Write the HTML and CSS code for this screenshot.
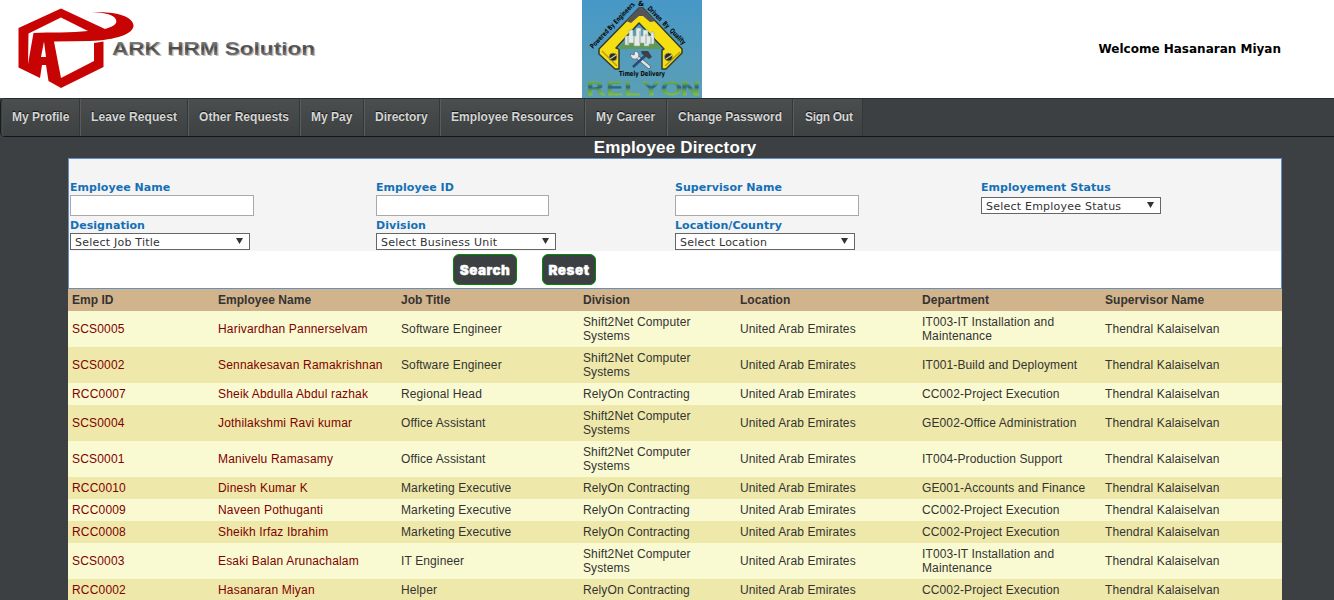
FILE: index.html
```html
<!DOCTYPE html>
<html lang="en">
<head>
<meta charset="utf-8">
<title>Employee Directory</title>
<link rel="stylesheet" href="styles.css">
</head>
<body>
<header class="header">
  <svg class="ark-logo" width="330" height="98" viewBox="0 0 330 98" role="img" aria-label="ARK HRM Solution">
    <defs>
      <linearGradient id="silver" x1="0" y1="0" x2="0" y2="1"><stop offset="0" stop-color="#aaa"/><stop offset=".5" stop-color="#484848"/><stop offset="1" stop-color="#888"/></linearGradient>
      <filter id="soft" x="-5%" y="-20%" width="110%" height="150%"><feGaussianBlur stdDeviation=".7"/></filter>
    </defs>
    <g fill="#c80303">
      <path fill-rule="evenodd" d="M18.500 28 L61 8.500 L105 29 C116 26 119 22 114 17 C109 13.500 102 12.500 92 12.500 C112 11 132 15 133.500 25 C134 34 116 40 90 41 L54 41.500 L61 78 L94 61 L94 43 L103.500 41.500 L103.500 67 L61 88 L48.500 81 L46 65 L42 65 L40 78 L18.500 67.500 Z M28.500 33.500 L28 64 L33.500 33 C50 32 72 33 88 31 L61 17.500 Z M44 41.500 L41 57 L46 57 Z"/>
    </g>
    <text class="ark-name" x="113.500" y="56" textLength="203" lengthAdjust="spacingAndGlyphs" fill="#aaa" opacity=".7" filter="url(#soft)">ARK HRM Solution</text>
    <text class="ark-name" x="112" y="54.500" textLength="203" lengthAdjust="spacingAndGlyphs" fill="url(#silver)">ARK HRM Solution</text>
  </svg>
  <svg class="relyon-logo" width="120" height="98" viewBox="0 0 120 98" role="img" aria-label="Relyon">
    <defs>
      <linearGradient id="sky" x1="0" y1="0" x2="0" y2="1"><stop offset="0" stop-color="#4798c7"/><stop offset="1" stop-color="#5c9fb5"/></linearGradient>
      <linearGradient id="word" gradientUnits="userSpaceOnUse" x1="0" y1="-15" x2="0" y2="0"><stop offset="0" stop-color="#7fba45"/><stop offset=".3" stop-color="#5f9f50"/><stop offset=".5" stop-color="#215f92"/><stop offset=".7" stop-color="#5f9f50"/><stop offset="1" stop-color="#7fba45"/></linearGradient>
      <path id="left-edge" d="M11 49 L54 4"/>
      <path id="right-edge" d="M65 9 L102 46"/>
    </defs>
    <rect width="120" height="98" fill="url(#sky)"/>
    <path d="M57 8 L17 49 L17 54 L33 69 L37 69 L37 49 L34 48 L57 23 L82 49 L80 50 L80 69 L84 69 L100 53 L100 49 L61 8 Z" fill="#f5df12" stroke="#343b31" stroke-width="1.500" stroke-linejoin="round"/>
    <path d="M57 8 L44 21 L49 23 L57 16 L61 16 L68 22 L74 21 L61 8 Z" fill="#565454"/>
    <path d="M20 51 L35 66 M83 66 L98 52" stroke="#baa000" stroke-width="1.500"/>
    <g stroke="#a5a070" stroke-width=".8" fill="#292b27"><circle cx="31" cy="57" r="4"/><circle cx="86.500" cy="57" r="4"/></g>
    <path d="M28 59 L34 55 M84 59 L90 55" stroke="#d7cf70" stroke-width="1.300"/>
    <path d="M43 41 L73 41 L79 49 L36 49 Z" fill="#5f9955"/>
    <path d="M43 36 h4 v-6 h4 v6 h3 v-8 h5 v8 h2 v-6 h5 v6 h3 v-4 h3 v12 h-5 v2 h-5 v-3 h-4 v3 h-6 v-3 h-5 v2 h-4 Z" fill="#e5ece8" stroke="#92a7a1" stroke-width=".6"/>
    <path d="M46 37 v7 M52 35 v8 M58 31 v12 M64 34 v10 M69 37 v7" stroke="#8da79e"/>
    <path d="M54 56 L67 67" stroke="#59636c" stroke-width="4" stroke-linecap="round"/>
    <path d="M54 56 L67 67" stroke="#dce3e8" stroke-width="2.500" stroke-linecap="round"/>
    <path d="M48.500 54 L52 55 L53 51 C58 52 58 58 54 59 C51 60 48 57 48.500 54 Z" fill="#e3e9ed" stroke="#59636c" stroke-width=".7"/>
    <path d="M64 55 L51 67" stroke="#294b75" stroke-width="2.500"/>
    <path d="M59 51 L66 51 L70 57 L67 59 L63 56 L60 54 Z" fill="#3b4144"/>
    <g class="motto" fill="#080808">
      <text><textPath href="#left-edge" textLength="61" lengthAdjust="spacingAndGlyphs">Powered By Engineers</textPath></text>
      <text x="56" y="6">&amp;</text>
      <text><textPath href="#right-edge" textLength="51" lengthAdjust="spacingAndGlyphs">Driven&#160; By&#160; Quality</textPath></text>
      <text x="37" y="75.500" textLength="46" lengthAdjust="spacingAndGlyphs">Timely Delivery</text>
    </g>
    <g transform="translate(0 94.500) scale(1.450 1)">
      <text class="relyon-word" x="3 16.500 29 42 54.500 68" y="0" fill="url(#word)" stroke="url(#word)" stroke-width="1">RELYON</text>
    </g>
  </svg>
  <div class="welcome">Welcome Hasanaran Miyan</div>
</header>
<nav class="menu">
  <a>My Profile</a><a>Leave Request</a><a>Other Requests</a><a>My Pay</a><a>Directory</a><a>Employee Resources</a><a>My Career</a><a>Change Password</a><a>Sign Out</a>
</nav>
<main class="content">
  <h1 class="title">Employee Directory</h1>
  <form class="filters">
    <div class="fields">
      <div class="field"><label>Employee Name</label><input type="text"></div>
      <div class="field"><label>Employee ID</label><input class="short" type="text"></div>
      <div class="field"><label>Supervisor Name</label><input type="text"></div>
      <div class="field status"><label>Employement Status</label><div class="select">Select Employee Status<i></i></div></div>
      <div class="field"><label>Designation</label><div class="select">Select Job Title<i></i></div></div>
      <div class="field"><label>Division</label><div class="select">Select Business Unit<i></i></div></div>
      <div class="field"><label>Location/Country</label><div class="select">Select Location<i></i></div></div>
    </div>
    <div class="actions"><button type="button" class="search">Search</button><button type="button" class="reset">Reset</button></div>
  </form>
  <table class="directory">
    <colgroup><col class="c-id"><col class="c-name"><col class="c-job"><col class="c-div"><col class="c-loc"><col class="c-dep"><col class="c-sup"></colgroup>
    <thead><tr><th>Emp ID</th><th>Employee Name</th><th>Job Title</th><th>Division</th><th>Location</th><th>Department</th><th>Supervisor Name</th></tr></thead>
    <tbody>
      <tr><td>SCS0005</td><td>Harivardhan Pannerselvam</td><td>Software Engineer</td><td>Shift2Net Computer<br>Systems</td><td>United Arab Emirates</td><td>IT003-IT Installation and<br>Maintenance</td><td>Thendral Kalaiselvan</td></tr>
      <tr><td>SCS0002</td><td>Sennakesavan Ramakrishnan</td><td>Software Engineer</td><td>Shift2Net Computer<br>Systems</td><td>United Arab Emirates</td><td>IT001-Build and Deployment</td><td>Thendral Kalaiselvan</td></tr>
      <tr><td>RCC0007</td><td>Sheik Abdulla Abdul razhak</td><td>Regional Head</td><td>RelyOn Contracting</td><td>United Arab Emirates</td><td>CC002-Project Execution</td><td>Thendral Kalaiselvan</td></tr>
      <tr><td>SCS0004</td><td>Jothilakshmi Ravi kumar</td><td>Office Assistant</td><td>Shift2Net Computer<br>Systems</td><td>United Arab Emirates</td><td>GE002-Office Administration</td><td>Thendral Kalaiselvan</td></tr>
      <tr><td>SCS0001</td><td>Manivelu Ramasamy</td><td>Office Assistant</td><td>Shift2Net Computer<br>Systems</td><td>United Arab Emirates</td><td>IT004-Production Support</td><td>Thendral Kalaiselvan</td></tr>
      <tr><td>RCC0010</td><td>Dinesh Kumar K</td><td>Marketing Executive</td><td>RelyOn Contracting</td><td>United Arab Emirates</td><td>GE001-Accounts and Finance</td><td>Thendral Kalaiselvan</td></tr>
      <tr><td>RCC0009</td><td>Naveen Pothuganti</td><td>Marketing Executive</td><td>RelyOn Contracting</td><td>United Arab Emirates</td><td>CC002-Project Execution</td><td>Thendral Kalaiselvan</td></tr>
      <tr><td>RCC0008</td><td>Sheikh Irfaz Ibrahim</td><td>Marketing Executive</td><td>RelyOn Contracting</td><td>United Arab Emirates</td><td>CC002-Project Execution</td><td>Thendral Kalaiselvan</td></tr>
      <tr><td>SCS0003</td><td>Esaki Balan Arunachalam</td><td>IT Engineer</td><td>Shift2Net Computer<br>Systems</td><td>United Arab Emirates</td><td>IT003-IT Installation and<br>Maintenance</td><td>Thendral Kalaiselvan</td></tr>
      <tr><td>RCC0002</td><td>Hasanaran Miyan</td><td>Helper</td><td>RelyOn Contracting</td><td>United Arab Emirates</td><td>CC002-Project Execution</td><td>Thendral Kalaiselvan</td></tr>
    </tbody>
  </table>
</main>
</body>
</html>
```

FILE: styles.css
```css
* { box-sizing: border-box; }
html, body { height: 600px; overflow: hidden; }
body { margin: 0; background: #3c4042; font-family: "Liberation Sans", Arial, sans-serif; font-size: 12px; color: #333; }
.header { display: grid; grid-template-columns: 582px 120px 1fr; height: 98px; background: #fff; }
.header svg { display: block; }
.ark-name { font: bold 18.5px "Liberation Sans", Arial, sans-serif; }
.motto { font: bold 7px "DejaVu Sans", sans-serif; }
.relyon-word { font: 18.5px "DejaVu Sans", sans-serif; }
.welcome { padding: 42px 53px 0 0; text-align: right; font: bold 12px/15px "DejaVu Sans", Verdana, sans-serif; color: #000; }
.menu { display: flex; height: 39px; padding-left: 1px; border-top: 1px solid #252e2e; border-bottom: 1px solid #111719; border-left: 1px solid #181c1c; border-radius: 5px 0 0 5px; }
.menu a { padding-left: 9px; border-left: 1px solid #5a5c5c; border-right: 1px solid #343838; background: linear-gradient(#4c4e4e, #3d4142); font-weight: bold; line-height: 37px; color: #d5d5d5; text-shadow: 0 -1px 1px #111; white-space: nowrap; }
.menu a:nth-child(1) { width: 78px; border-left-color: #484b4b; }
.menu a:nth-child(2) { width: 108px; letter-spacing: .1px; }
.menu a:nth-child(3) { width: 112px; letter-spacing: .05px; }
.menu a:nth-child(4) { width: 64px; }
.menu a:nth-child(5) { width: 76px; }
.menu a:nth-child(6) { width: 145px; letter-spacing: .06px; }
.menu a:nth-child(7) { width: 82px; letter-spacing: .15px; }
.menu a:nth-child(8) { width: 126px; }
.menu a:nth-child(9) { width: 70px; letter-spacing: -.3px; }
.menu a + a { padding-left: 10px; }
.menu a:last-child { padding-left: 11px; }
.content { width: 1214px; margin-left: 68px; }
.title { height: 21px; margin: 0; text-align: center; font-size: 17px; line-height: 21px; letter-spacing: .17px; color: #fff; }
.filters { height: 131px; border: 1px solid #6190c6; background: #fff; font-family: "DejaVu Sans", Verdana, sans-serif; }
.fields { display: grid; grid-template-columns: 306px 299px 306px 1fr; grid-template-rows: 38px 32px; height: 92px; padding: 21px 0 0 1px; background: #f4f4f4; }
.field label { display: block; height: 15px; font-size: 11px; line-height: 15px; font-weight: bold; color: #1470b6; letter-spacing: .05px; }
.field input { display: block; width: 184px; height: 21px; border: 1px solid #a9a9a9; background: #fff; padding: 1px; }
.field .short { width: 173px; }
.select { display: flex; justify-content: space-between; width: 180px; height: 17px; padding: 0 6px 0 4px; border: 1px solid #666; background: #fff; font-size: 11px; line-height: 17px; letter-spacing: .22px; color: #333; }
.select i { width: 7px; height: 6px; margin-top: 4px; background: #333; clip-path: polygon(0 0, 100% 0, 50% 100%); }
.status .select { margin-top: 2px; }
.actions { display: flex; gap: 25px; padding: 3px 0 0 384px; }
.actions button { height: 31px; padding: 1px 0 0; border: 1px solid #008a00; border-radius: 6px; background: #3c4042; color: #fff; font: 900 13.5px "Inter", sans-serif; letter-spacing: .5px; -webkit-text-stroke: .4px #fff; }
.actions .search { width: 64px; }
.actions .reset { width: 54px; }
.directory { width: 1214px; table-layout: fixed; border-collapse: collapse; letter-spacing: .12px; }
.c-id { width: 146px; }
.c-name { width: 183px; }
.c-job { width: 182px; }
.c-div { width: 157px; }
.c-loc { width: 182px; }
.c-dep { width: 183px; }
.c-sup { width: 181px; }
.directory th { height: 22px; padding: 4px; background: #d2b48c; line-height: 14px; letter-spacing: .03px; text-align: left; }
.directory td { padding: 4px; line-height: 14px; white-space: nowrap; }
.directory tbody tr { background: #fafad2; }
.directory tbody tr:nth-child(even) { background: #eee8aa; }
.directory td:nth-child(-n+2) { color: #800000; letter-spacing: .18px; }
```
